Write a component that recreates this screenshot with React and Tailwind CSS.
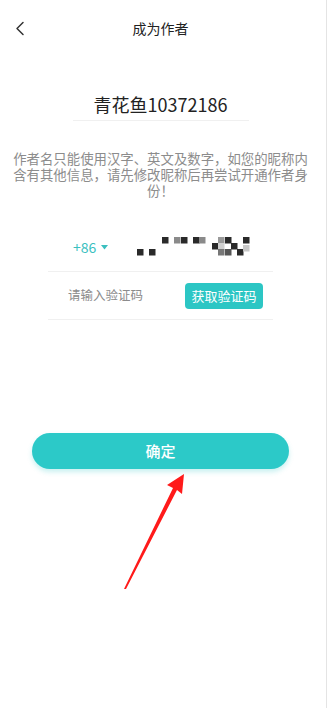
import React from 'react';

// mosaic cells for the blurred phone number: [x, y, shade]
const MOSAIC = [
  [0, 12, '#2a2a2a'], [12, 12, '#2a2a2a'],
  [25, 0, '#2a2a2a'], [37, 0, '#8a8a8a'], [44, 0, '#2a2a2a'],
  [56, 0, '#2a2a2a'], [62, 0, '#8a8a8a'],
  [75, 6, '#2a2a2a'], [81, 0, '#9a9a9a'], [88, 0, '#2a2a2a'],
  [81, 6, '#d0d0d0'], [94, 6, '#2a2a2a'], [106, 0, '#2a2a2a'],
  [81, 12, '#777'], [88, 12, '#555'], [100, 12, '#2a2a2a'], [106, 8, '#c8c8c8'],
];

const BackIcon = () => (
  <svg width="10" height="15" viewBox="0 0 10 15" fill="none">
    <path d="M8 1.5 L2 7.5 L8 13.5" stroke="#333" strokeWidth="1.5" strokeLinecap="round" strokeLinejoin="round" />
  </svg>
);

function App() {
  return (
    <div className="relative flex min-h-[708px] w-[328px] bg-white" style={{ fontFamily: '"Noto Sans CJK SC", "Noto Sans", sans-serif' }}>
      <div className="w-[321px] flex flex-col">
        {/* header */}
        <div className="grid h-[56px] grid-cols-[48px_1fr_48px] items-center">
          <div className="pl-[15px]"><BackIcon /></div>
          <h1 className="text-center text-[14px] text-[#222]">成为作者</h1>
          <div />
        </div>

        {/* author name */}
        <div className="mx-auto mt-[34px] w-[176px] border-b border-[#f0f0f0] pb-[2px] text-center">
          <p className="text-[18px] leading-[28px] text-[#222]">青花鱼10372186</p>
        </div>

        <p className="mt-[29px] px-[13px] text-center text-[13.4px] leading-[16px] text-[#8c8c8c]">
          作者名只能使用汉字、英文及数字，如您的昵称内含有其他信息，请先修改昵称后再尝试开通作者身份！
        </p>

        {/* phone row */}
        <div className="mx-[48px] mt-[24px] flex h-[50px] items-center border-b border-[#f0f0f0]">
          <div className="flex w-[89px] items-center pl-[25px] pt-[2px] text-[14px] text-[#3bbfbf]">
            <span>+86</span>
            <svg className="ml-[5px]" width="7" height="5" viewBox="0 0 7 5">
              <path d="M0 0 H7 L3.5 4.5 Z" fill="#3bbfbf" />
            </svg>
          </div>
          <svg width="116" height="20" viewBox="0 0 116 20">
            {MOSAIC.map(([x, y, c], i) => (
              <rect key={i} x={x} y={y} width="6.5" height="6.5" fill={c} />
            ))}
          </svg>
        </div>

        {/* code row */}
        <div className="mx-[48px] flex h-[48px] items-center justify-between border-b border-[#f0f0f0]">
          <span className="pl-[20px] text-[12.5px] text-[#8c8c8c]">请输入验证码</span>
          <button className="mr-[10px] h-[26px] w-[78px] rounded-[4px] bg-[#2cc6c4] text-[13px] text-white">获取验证码</button>
        </div>

        {/* confirm */}
        <div className="px-[32px] pt-[113px]">
          <button className="h-[36px] w-full rounded-full bg-[#2cc9c8] text-[15px] font-medium text-white shadow-[0_3px_5px_rgba(44,201,200,0.25)]">
            确定
          </button>
        </div>
      </div>
      <div className="w-[5px]" />
      <div className="w-px bg-[#e4e4e4]" />

      {/* red annotation arrow */}
      <svg className="absolute left-0 top-0" width="328" height="708" viewBox="0 0 328 708">
        <path d="M124 589 L173 488 L167 485 L184 474 L182 494 L177 490 L126 589 Z" fill="#ff1a1a" />
      </svg>
    </div>
  );
}

export default App;
